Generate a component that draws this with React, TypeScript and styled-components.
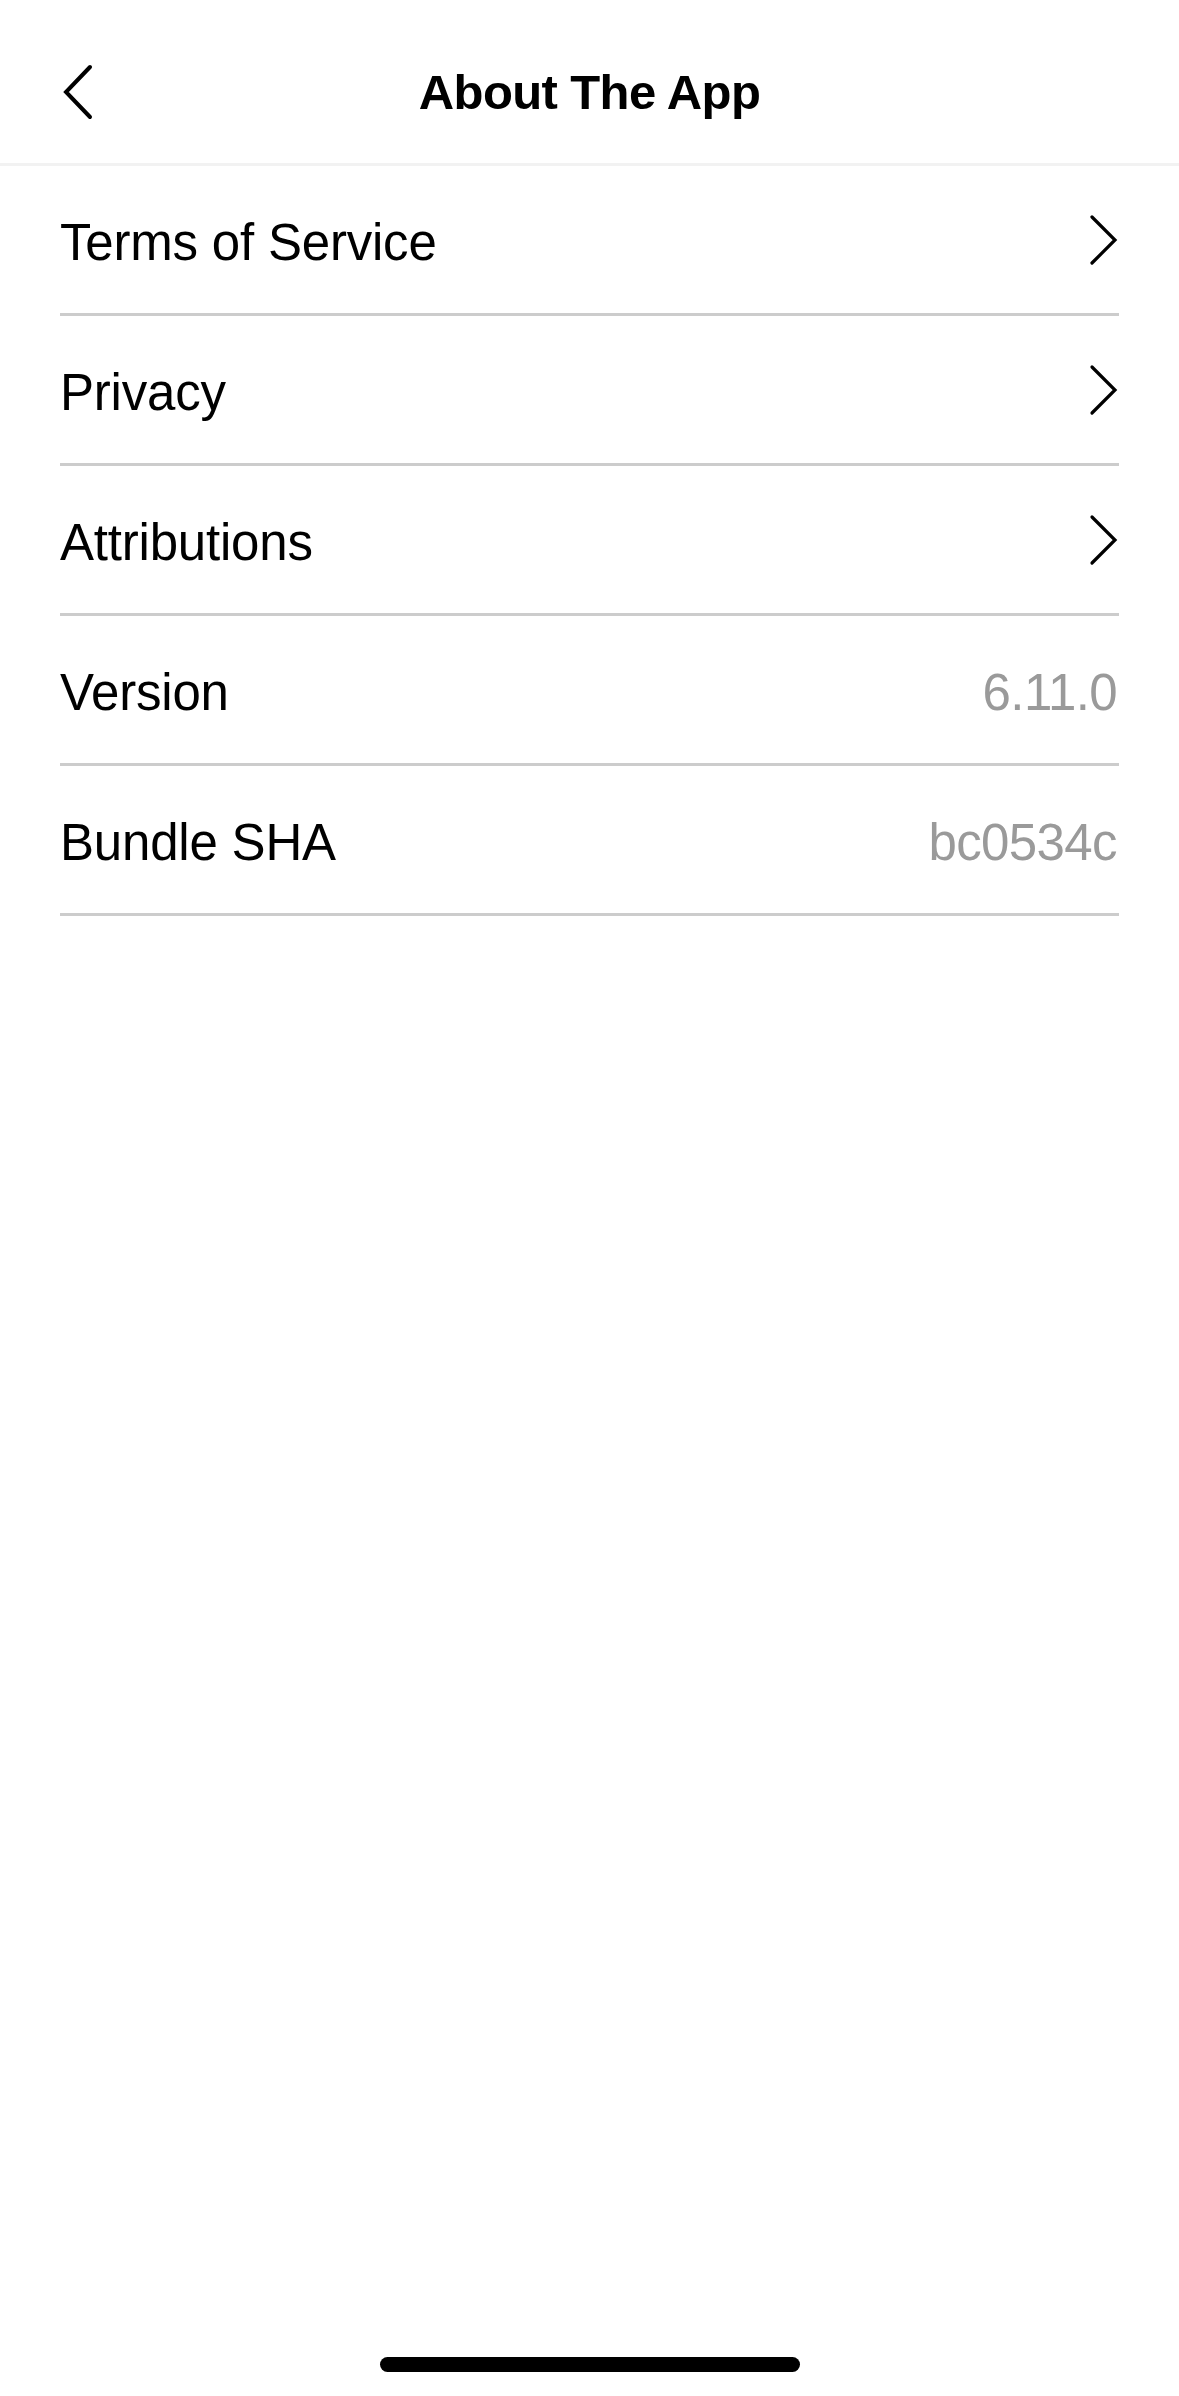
import React from "react";
import styled, { createGlobalStyle } from "styled-components";

const Global = createGlobalStyle`
  html, body { margin: 0; padding: 0; background: #ffffff; }
  body { font-family: "Liberation Sans", Arial, Helvetica, sans-serif; color: #000; }
  * { box-sizing: border-box; }
`;

const Page = styled.div`
  width: 1179px;
  min-height: 2396px;
  display: flex;
  flex-direction: column;
  background: #fff;
`;

const Header = styled.header`
  height: 166px;
  display: grid;
  grid-template-columns: 160px 1fr 160px;
  align-items: center;
  border-bottom: 3px solid #f2f2f2;
  padding-top: 20px;
`;

const BackButton = styled.button`
  border: none;
  background: none;
  padding: 0 0 0 58px;
  display: flex;
  align-items: center;
  height: 60px;
  cursor: pointer;
`;

const Title = styled.h1`
  margin: 0;
  text-align: center;
  font-size: 49px;
  font-weight: 700;
  letter-spacing: -0.6px;
`;

const List = styled.ul`
  list-style: none;
  margin: 0;
  padding: 0 60px;
`;

const Row = styled.li`
  height: 150px;
  padding-top: 5px;
  display: flex;
  align-items: center;
  justify-content: space-between;
  border-bottom: 3px solid #cccccc;
`;

const Label = styled.span`
  font-size: 51px;
  letter-spacing: -0.2px;
  color: #000;
`;

const Value = styled.span`
  font-size: 51px;
  letter-spacing: -0.6px;
  color: #9a9a9a;
  padding-right: 2px;
`;

const ChevronWrap = styled.span`
  display: flex;
  margin-top: -5px;
`;

const HomeIndicator = styled.div`
  margin: auto auto 24px;
  width: 420px;
  height: 15px;
  border-radius: 8px;
  background: #000;
`;

const Chevron = () => (
  <ChevronWrap>
    <svg width="30" height="52" viewBox="0 0 30 52" fill="none">
      <path d="M3 3 L26 26 L3 49" stroke="#000" strokeWidth="3.2" strokeLinecap="round" strokeLinejoin="miter" />
    </svg>
  </ChevronWrap>
);

const BackIcon = () => (
  <svg width="36" height="56" viewBox="0 0 36 56" fill="none">
    <path d="M32 3 L8 28 L32 53" stroke="#000" strokeWidth="4" strokeLinecap="round" />
  </svg>
);

type Item = { label: string; value?: string };

const items: Item[] = [
  { label: "Terms of Service" },
  { label: "Privacy" },
  { label: "Attributions" },
  { label: "Version", value: "6.11.0" },
  { label: "Bundle SHA", value: "bc0534c" },
];

export default function App() {
  return (
    <Page>
      <Global />
      <Header>
        <BackButton aria-label="Back">
          <BackIcon />
        </BackButton>
        <Title>About The App</Title>
        <div />
      </Header>
      <List>
        {items.map((it) => (
          <Row key={it.label}>
            <Label>{it.label}</Label>
            {it.value ? <Value>{it.value}</Value> : <Chevron />}
          </Row>
        ))}
      </List>
      <HomeIndicator />
    </Page>
  );
}
